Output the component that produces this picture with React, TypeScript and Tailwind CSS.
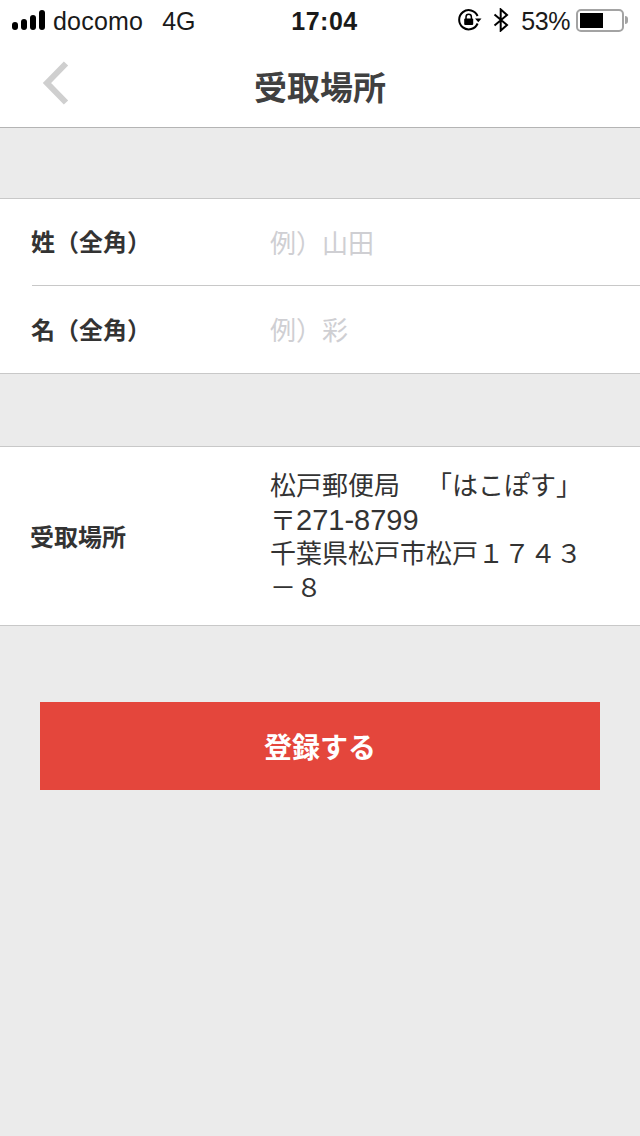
const jpFont = "font-['Noto_Sans_CJK_JP','Noto_Sans_CJK_SC',sans-serif] [text-spacing-trim:space-all]";

function SignalBars() {
  return (
    <svg width="34" height="20" viewBox="0 0 34 20" aria-hidden="true">
      <rect x="0" y="12" width="6" height="8" rx="3" fill="#000" />
      <rect x="9" y="9" width="6" height="11" rx="3" fill="#000" />
      <rect x="18" y="5" width="6" height="15" rx="3" fill="#000" />
      <rect x="27" y="0" width="6" height="20" rx="3" fill="#000" />
    </svg>
  );
}

function RotationLock() {
  return (
    <svg width="24" height="22" viewBox="0 0 24 22" aria-hidden="true">
      <path d="M19.6 14.5A9.6 9.6 0 1 1 19.6 7" fill="none" stroke="#000" strokeWidth="2" />
      <path d="M17 9.6h6.5l-3.2 3.6z" fill="#000" />
      <rect x="6.2" y="9.5" width="9" height="6.5" rx="1" fill="#000" />
      <path d="M8 10V8a2.7 2.7 0 0 1 5.4 0v2" fill="none" stroke="#000" strokeWidth="1.5" />
    </svg>
  );
}

function Bluetooth() {
  return (
    <svg width="16" height="24" viewBox="0 0 16 24" aria-hidden="true">
      <path d="M1.5 6.5 14 17l-6.3 5.6V1.4L14 7 1.5 17.5" fill="none" stroke="#000" strokeWidth="2" />
    </svg>
  );
}

function Battery() {
  return (
    <div className="flex items-center">
      <div className="h-[23px] w-[48px] rounded-[5px] border-2 border-[#a3a3a3] p-[2px]">
        <div className="h-full w-[23px] bg-black" />
      </div>
      <div className="ml-[1px] h-[8px] w-[3px] rounded-r-full bg-[#a3a3a3]" />
    </div>
  );
}

function StatusBar() {
  return (
    <div className="relative flex h-[40px] items-center justify-between px-[12px] font-['Liberation_Sans',sans-serif] text-[25px] text-[#1a1a1a]">
      <div className="flex items-center">
        <SignalBars />
        <span className="ml-[7px] pt-[3px] tracking-[0.2px]">docomo</span>
        <span className="ml-[19px] pt-[3px]">4G</span>
      </div>
      <span className="absolute left-0 right-0 pl-[9px] pt-[3px] text-center font-bold tracking-[0.5px]">17:04</span>
      <div className="flex items-center">
        <RotationLock />
        <span className="ml-[11px] flex"><Bluetooth /></span>
        <span className="ml-[12px] pt-[3px] tracking-[-0.4px]">53%</span>
        <span className="ml-[6px] flex"><Battery /></span>
      </div>
    </div>
  );
}

function NavBar() {
  return (
    <div className="relative flex h-[88px] items-center justify-center border-b border-[#b4b4b4] bg-white">
      <svg className="absolute left-[42px] top-[21px]" width="28" height="44" viewBox="0 0 28 44" aria-hidden="true">
        <path d="M24 2.5 5 22l19 19.5" fill="none" stroke="#cfcfcf" strokeWidth="6" />
      </svg>
      <h1 className="pt-[7px] text-[33px] font-bold text-[#404040]">受取場所</h1>
    </div>
  );
}

function FormRow({ label, placeholder, height }: { label: string; placeholder: string; height: string }) {
  return (
    <div className={`flex items-center pb-[2px] ${height}`}>
      <span className="w-[270px] pl-[31px] text-[24px] font-bold text-[#333333]">{label}</span>
      <span className="text-[26px] text-[#cfcfd3]">{placeholder}</span>
    </div>
  );
}

export default function App() {
  return (
    <div className={`${jpFont} min-h-[1136px] bg-[#ebebeb]`}>
      <div className="bg-white">
        <StatusBar />
        <NavBar />
      </div>

      {/* Name */}
      <div className="mt-[70px] border-y border-[#c8c8c8] bg-white">
        <FormRow label="姓（全角）" placeholder="例）山田" height="h-[86px]" />
        <div className="ml-[32px] h-px bg-[#c8c8c8]" />
        <FormRow label="名（全角）" placeholder="例）彩" height="h-[87px]" />
      </div>

      {/* Pickup place */}
      <div className="mt-[72px] flex h-[180px] items-center border-y border-[#c8c8c8] bg-white">
        <span className="w-[270px] pb-[1px] pl-[30px] text-[24px] font-bold text-[#333333]">受取場所</span>
        <p className="w-[320px] pt-[3px] font-['Liberation_Sans','Noto_Sans_CJK_JP',sans-serif] text-[26px] leading-[33.5px] text-[#333333]">
          松戸郵便局　「はこぽす」<br />
          〒<span className="text-[29px]">271-8799</span><br />
          千葉県松戸市松戸１７４３－８
        </p>
      </div>

      <div className="mt-[76px] px-[40px]">
        <button className="h-[88px] w-full bg-[#e4463c] text-[28px] font-bold text-white">登録する</button>
      </div>
    </div>
  );
}
